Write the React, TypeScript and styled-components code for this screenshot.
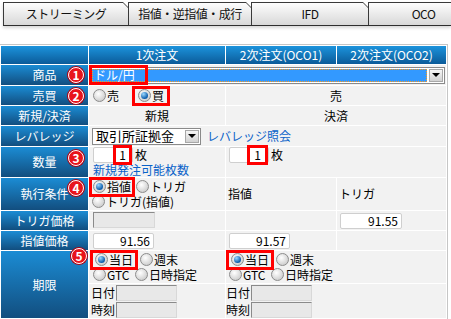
import styled, { createGlobalStyle, css } from 'styled-components';

const Global = createGlobalStyle`
  body {
    margin: 0;
    background: #fff;
    font-family: "Noto Sans CJK JP", "Noto Sans", sans-serif;
    font-size: 12px;
    line-height: 14px;
    color: #000;
  }
`;

const TabBar = styled.div`
  display: flex;
  margin: 2px 0 0 3px;
  height: 23px;
  border-bottom: 1px solid #2e2e2e;
  box-shadow: 0 2px 3px rgba(0, 0, 0, 0.16);
  overflow: hidden;
`;

const Tab = styled.div<{ $w: number }>`
  flex: 0 0 ${(p) => p.$w}px;
  background: #3a3a3a;
  padding: 1px 0 0 1px;
  box-sizing: border-box;
  clip-path: polygon(0 0, calc(100% - 5px) 0, 100% 5px, 100% 100%, 0 100%);
`;

const TabFace = styled.div`
  height: 100%;
  display: flex;
  align-items: center;
  justify-content: center;
  background: linear-gradient(#fdfdfd, #d8d8d8);
  clip-path: polygon(0 0, calc(100% - 5px) 0, 100% 5px, 100% 100%, 0 100%);
  font-size: 12px;
  letter-spacing: -0.5px;
  color: #111;
`;

const Grid = styled.table`
  margin-top: 18px;
  border-collapse: separate;
  border-spacing: 1px;
  border: 1px solid #c6c6c6;
  border-left: 0;
  width: 448px;
  table-layout: fixed;
  background: #fff;
`;

const Row = styled.tr<{ $h: number }>`
  height: ${(p) => p.$h}px;
`;

const Head = styled.th`
  padding: 0;
  background: linear-gradient(#1c93dc, #0b5b99);
  color: #fff;
  font-weight: normal;
  text-align: center;
`;

const Label = styled.th`
  position: relative;
  padding: 0;
  background: linear-gradient(#1b8cd4, #124e7f);
  color: #fff;
  font-weight: normal;
  text-align: center;
`;

const Cell = styled.td<{ $center?: boolean; $pad?: number }>`
  padding: 0 0 0 ${(p) => p.$pad ?? 3}px;
  background: #f2f2f2;
  vertical-align: middle;
  text-align: ${(p) => (p.$center ? 'center' : 'left')};
  white-space: nowrap;
`;

// red numbered markers laid over the screenshot
const Badge = styled.span<{ $top: number; $left?: number }>`
  position: absolute;
  z-index: 2;
  top: ${(p) => p.$top}px;
  left: ${(p) => p.$left ?? 67}px;
  width: 16px;
  height: 16px;
  box-sizing: border-box;
  border-radius: 50%;
  border: 1px solid #fff;
  background: #e8141c;
  box-shadow: 0 0 0 1px #b00010;
  color: #fff;
  font-weight: bold;
  font-size: 12px;
  line-height: 14px;
  text-align: center;
`;

const Mark = styled.span<{ $px?: number }>`
  display: inline-flex;
  align-items: center;
  outline: 3px solid #f00;
  padding: 0 ${(p) => p.$px ?? 1}px;
  position: relative;
  z-index: 1;
`;

const Line = styled.div<{ $gap?: number }>`
  display: flex;
  align-items: center;
  gap: ${(p) => p.$gap ?? 0}px;
  height: 15px;
`;

const Opt = styled.span<{ $w?: number }>`
  display: inline-flex;
  align-items: center;
  gap: 1px;
  ${(p) => p.$w && css`width: ${p.$w}px;`}
`;

const Radio = styled.span<{ $on?: boolean }>`
  position: relative;
  display: inline-block;
  width: 11px;
  height: 11px;
  border-radius: 50%;
  border: 1px solid #8c8c8c;
  background: radial-gradient(circle at 40% 35%, #ffffff, #cfcfcf 75%);
  ${(p) =>
    p.$on &&
    css`
      &::after {
        content: '';
        position: absolute;
        left: 2px;
        top: 2px;
        width: 7px;
        height: 7px;
        border-radius: 50%;
        background: radial-gradient(circle at 35% 30%, #9bd8ff, #0b5cab 70%);
      }
    `}
`;

const Combo = styled.div<{ $w: number }>`
  display: flex;
  width: ${(p) => p.$w}px;
  height: 17px;
  box-sizing: border-box;
  border: 1px solid #8a8a8a;
  background: #fff;
  padding: 1px;
`;

const ComboText = styled.div<{ $sel?: boolean; $size?: number }>`
  flex: 1;
  display: flex;
  align-items: center;
  font-size: ${(p) => p.$size ?? 12}px;
  padding-left: 2px;
  ${(p) =>
    p.$sel &&
    css`
      background: #3399ff;
      color: #fff;
      outline: 1px dotted #ff9a1a;
      outline-offset: -1px;
      padding-left: 0;
    `}
`;

const ComboBtn = styled.div`
  width: 14px;
  margin-left: 2px;
  box-sizing: border-box;
  border: 1px solid #a8a8a8;
  background: linear-gradient(#f6f6f6, #d2d2d2);
  display: flex;
  align-items: center;
  justify-content: center;
  &::after {
    content: '';
    border-left: 4px solid transparent;
    border-right: 4px solid transparent;
    border-top: 4px solid #000;
  }
`;

const Field = styled.span<{ $w: number; $off?: boolean }>`
  display: inline-flex;
  justify-content: flex-end;
  align-items: center;
  width: ${(p) => p.$w}px;
  height: 16px;
  box-sizing: border-box;
  padding-right: 3px;
  border: 1px solid #cfcfcf;
  border-radius: 2px;
  background: #fff;
  ${(p) =>
    p.$off &&
    css`
      background: #e8e8e8;
      border-color: #8a8a8a #d8d8d8 #d8d8d8 #8a8a8a;
      border-radius: 0;
    `}
`;

const Link = styled.span`
  color: #0a62c9;
`;

const Stack = styled.div`
  display: flex;
  flex-direction: column;
`;

const Span2 = styled.div`
  display: flex;
  align-items: center;
  gap: 6px;
`;

function Term() {
  return (
    <Stack>
      <Line $gap={5}>
        <Mark $px={2}>
          <Opt>
            <Radio $on />
            当日
          </Opt>
        </Mark>
        <Opt>
          <Radio />
          週末
        </Opt>
      </Line>
      <Line>
        <Opt $w={42}>
          <Radio />
          GTC
        </Opt>
        <Opt>
          <Radio />
          日時指定
        </Opt>
      </Line>
    </Stack>
  );
}

function DateTime() {
  return (
    <Stack>
      <Line $gap={1} style={{ height: 17 }}>
        日付
        <Field $w={61} $off />
      </Line>
      <Line $gap={1} style={{ height: 17 }}>
        時刻
        <Field $w={61} $off />
      </Line>
    </Stack>
  );
}

export default function App() {
  return (
    <>
      <Global />
      <TabBar>
        <Tab $w={125}>
          <TabFace>ストリーミング</TabFace>
        </Tab>
        <Tab $w={123}>
          <TabFace>指値・逆指値・成行</TabFace>
        </Tab>
        <Tab $w={117}>
          <TabFace>IFD</TabFace>
        </Tab>
        <Tab $w={110}>
          <TabFace>OCO</TabFace>
        </Tab>
      </TabBar>
      <Grid>
        <colgroup>
          <col style={{ width: 87 }} />
          <col style={{ width: 136 }} />
          <col style={{ width: 110 }} />
          <col style={{ width: 109 }} />
        </colgroup>
        <tbody>
          <Row $h={18}>
            <Head />
            <Head>1次注文</Head>
            <Head>2次注文(OCO1)</Head>
            <Head>2次注文(OCO2)</Head>
          </Row>
          <Row $h={20}>
            <Label>
              商品
              <Badge $top={2}>1</Badge>
            </Label>
            <Cell colSpan={3} $pad={1}>
              <Combo $w={355}>
                <ComboText $sel>
                  <Mark $px={2} style={{ paddingRight: 10 }}>
                    ドル/円
                  </Mark>
                </ComboText>
                <ComboBtn />
              </Combo>
            </Cell>
          </Row>
          <Row $h={19}>
            <Label>
              売買
              <Badge $top={2}>2</Badge>
            </Label>
            <Cell $pad={4}>
              <Line $gap={16}>
                <Opt>
                  <Radio />売
                </Opt>
                <Mark $px={3}>
                  <Opt>
                    <Radio $on />買
                  </Opt>
                </Mark>
              </Line>
            </Cell>
            <Cell colSpan={2} $center $pad={0}>
              売
            </Cell>
          </Row>
          <Row $h={19}>
            <Label>新規/決済</Label>
            <Cell $center $pad={0}>
              新規
            </Cell>
            <Cell colSpan={2} $center $pad={0}>
              決済
            </Cell>
          </Row>
          <Row $h={20}>
            <Label>レバレッジ</Label>
            <Cell colSpan={3} $pad={3}>
              <Span2>
                <Combo $w={109}>
                  <ComboText $size={13}>取引所証拠金</ComboText>
                  <ComboBtn />
                </Combo>
                <Link>レバレッジ照会</Link>
              </Span2>
            </Cell>
          </Row>
          <Row $h={29}>
            <Label>
              数量
              <Badge $top={3}>3</Badge>
            </Label>
            <Cell $pad={4}>
              <Stack>
                <Line $gap={2} style={{ height: 16 }}>
                  <Field $w={40}>
                    <Mark $px={3}>1</Mark>
                  </Field>
                  枚
                </Line>
                <Link>新規発注可能枚数</Link>
              </Stack>
            </Cell>
            <Cell colSpan={2} $pad={3}>
              <Stack>
                <Line $gap={2} style={{ height: 16 }}>
                  <Field $w={40}>
                    <Mark $px={4}>1</Mark>
                  </Field>
                  枚
                </Line>
                <span>&nbsp;</span>
              </Stack>
            </Cell>
          </Row>
          <Row $h={32}>
            <Label>
              執行条件
              <Badge $top={2}>4</Badge>
            </Label>
            <Cell $pad={3}>
              <Stack>
                <Line $gap={4}>
                  <Mark $px={1}>
                    <Opt>
                      <Radio $on />
                      指値
                    </Opt>
                  </Mark>
                  <Opt>
                    <Radio />
                    トリガ
                  </Opt>
                </Line>
                <Line>
                  <Opt>
                    <Radio />
                    トリガ(指値)
                  </Opt>
                </Line>
              </Stack>
            </Cell>
            <Cell $pad={2}>指値</Cell>
            <Cell $pad={2}>トリガ</Cell>
          </Row>
          <Row $h={19}>
            <Label>トリガ価格</Label>
            <Cell $pad={4}>
              <Field $w={62} $off />
            </Cell>
            <Cell />
            <Cell>
              <Field $w={62}>91.55</Field>
            </Cell>
          </Row>
          <Row $h={19}>
            <Label>指値価格</Label>
            <Cell $pad={4}>
              <Field $w={61}>91.56</Field>
            </Cell>
            <Cell>
              <Field $w={61}>91.57</Field>
            </Cell>
            <Cell />
          </Row>
          <Row $h={32}>
            <Label rowSpan={2}>
              期限
              <Badge $top={-3} $left={70}>5</Badge>
            </Label>
            <Cell $pad={4}>
              <Term />
            </Cell>
            <Cell colSpan={2} $pad={3}>
              <Term />
            </Cell>
          </Row>
          <Row $h={34}>
            <Cell $pad={2}>
              <DateTime />
            </Cell>
            <Cell colSpan={2} $pad={0}>
              <DateTime />
            </Cell>
          </Row>
        </tbody>
      </Grid>
    </>
  );
}
